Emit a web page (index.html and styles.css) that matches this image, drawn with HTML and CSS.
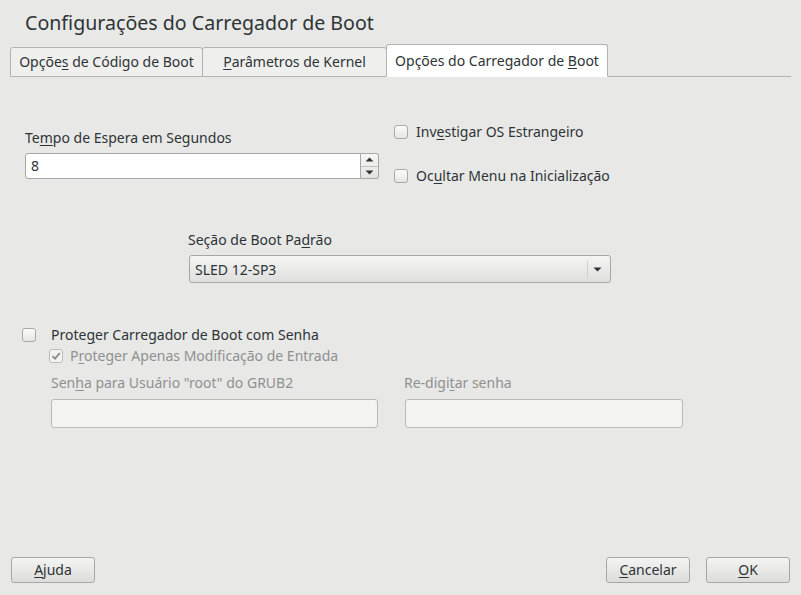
FILE: index.html
```html
<!DOCTYPE html>
<html>
<head>
<meta charset="utf-8">
<link rel="stylesheet" href="styles.css">
</head>
<body>
<div class="dialog">
  <h1 class="title">Configurações do Carregador de Boot</h1>
  <div class="tabs">
    <div class="tab tab-first"><span>Opçõe<u>s</u> de Código de Boot</span></div>
    <div class="tab tab-mid"><span><u>P</u>arâmetros de Kernel</span></div>
    <div class="tab tab-active"><span>Opções do Carregador de <u>B</u>oot</span></div>
    <div class="tab-line"></div>
  </div>
  <div class="content">
    <div class="row-top">
      <div class="col-timeout">
        <div class="label">Te<u>m</u>po de Espera em Segundos</div>
        <div class="spin">
          <div class="spin-input">8</div>
          <div class="spin-buttons">
            <div class="spin-btn"><svg width="9" height="5" viewBox="0 0 9 5"><path d="M0.5 4.5 L4.5 0.5 L8.5 4.5 Z" fill="#2e3436"/></svg></div>
            <div class="spin-btn"><svg width="9" height="5" viewBox="0 0 9 5"><path d="M0.5 0.5 L4.5 4.5 L8.5 0.5 Z" fill="#2e3436"/></svg></div>
          </div>
        </div>
      </div>
      <div class="col-checks">
        <label class="check-row"><span class="box"></span><span>Inv<u>e</u>stigar OS Estrangeiro</span></label>
        <label class="check-row"><span class="box"></span><span>Oc<u>u</u>ltar Menu na Inicialização</span></label>
      </div>
    </div>
    <div class="row-combo">
      <div class="label">Seção de Boot Pa<u>d</u>rão</div>
      <div class="combo">
        <span class="combo-text">SLED 12-SP3</span>
        <span class="combo-sep"></span>
        <svg class="combo-arrow" width="9" height="5" viewBox="0 0 9 5"><path d="M0.5 0.5 L4.5 4.5 L8.5 0.5 Z" fill="#2e3436"/></svg>
      </div>
    </div>
    <div class="row-pass">
      <label class="check-row main-check"><span class="box"></span><span>Prote<u>g</u>er Carregador de Boot com Senha</span></label>
      <div class="pass-body">
        <label class="check-row sub-check disabled"><span class="box checked"><svg width="12" height="12" viewBox="0 0 12 12"><path d="M2.5 6.2 L5 8.7 L9.8 3" fill="none" stroke="#8a8a8a" stroke-width="1.8"/></svg></span><span>P<u>r</u>oteger Apenas Modificação de Entrada</span></label>
        <div class="pass-fields">
          <div class="field f1">
            <div class="label disabled">Sen<u>h</u>a para Usuário "root" do GRUB2</div>
            <div class="text-input"></div>
          </div>
          <div class="field f2">
            <div class="label disabled">Re-digi<u>t</u>ar senha</div>
            <div class="text-input"></div>
          </div>
        </div>
      </div>
    </div>
  </div>
  <div class="footer">
    <button class="btn"><u>A</u>juda</button>
    <div class="spacer"></div>
    <button class="btn"><u>C</u>ancelar</button>
    <button class="btn btn-ok"><u>O</u>K</button>
  </div>
</div>
</body>
</html>
```

FILE: styles.css
```css
html, body {
  margin: 0;
  padding: 0;
}
body {
  background: #e8e8e7;
  font-family: "Noto Sans", "Open Sans", sans-serif;
  font-size: 14px;
  color: #2e3436;
  width: 801px;
  height: 595px;
  overflow: hidden;
}
u {
  text-decoration: underline;
  text-underline-offset: 2px;
}
.dialog {
  display: flex;
  flex-direction: column;
  height: 595px;
}
.title {
  margin: 0;
  padding: 10px 0 0 25px;
  font-size: 19.6px;
  font-weight: normal;
  line-height: 26px;
  height: 34px;
  box-sizing: border-box;
  color: #2e3436;
}
.tabs {
  display: flex;
  align-items: flex-end;
  margin-left: 10px;
  margin-top: 10px;
  height: 33px;
  box-sizing: border-box;
}
.tab {
  height: 30px;
  box-sizing: border-box;
  border: 1px solid #b3b3b2;
  border-radius: 3px 3px 0 0;
  background: #efefee;
  display: flex;
  align-items: center;
  justify-content: center;
  line-height: 18px;
  white-space: nowrap;
}
.tab + .tab {
  margin-left: -1px;
}
.tab-first {
  width: 193px;
}
.tab-mid {
  width: 185px;
}
.tab-active {
  height: 33px;
  width: 222px;
  background: #ffffff;
  border-bottom: 1px solid #ffffff;
}
.tab-line {
  flex: 0 0 183px;
  border-bottom: 1px solid #b3b3b2;
  height: 0;
}
.content {
  flex: 1;
  padding: 0;
}
.label {
  line-height: 19px;
}
.disabled {
  color: #8f9190;
}
.row-top {
  display: flex;
  align-items: flex-start;
  margin-top: 43px;
}
.col-timeout {
  margin-left: 25px;
  width: 354px;
  padding-top: 8px;
}
.col-timeout .label {
  margin-bottom: 6px;
}
.spin {
  display: flex;
  height: 26px;
}
.spin-input {
  flex: 1;
  background: #ffffff;
  border: 1px solid #a7a7a6;
  border-radius: 3px 0 0 3px;
  line-height: 24px;
  padding-left: 5px;
  box-sizing: border-box;
}
.spin-buttons {
  width: 18px;
  display: flex;
  flex-direction: column;
  border: 1px solid #a7a7a6;
  border-left: none;
  border-radius: 0 3px 3px 0;
  box-sizing: border-box;
  background: linear-gradient(#f6f6f5, #e4e4e3);
}
.spin-btn {
  flex: 1;
  display: flex;
  align-items: center;
  justify-content: center;
}
.spin-btn + .spin-btn {
  border-top: 1px solid #c4c4c3;
}
.col-checks {
  margin-left: 15px;
  margin-top: 2px;
  display: flex;
  flex-direction: column;
  gap: 25px;
}
.check-row {
  display: flex;
  align-items: center;
  line-height: 19px;
  gap: 8px;
}
.box {
  width: 14px;
  height: 14px;
  box-sizing: border-box;
  border: 1px solid #a9a9a8;
  border-radius: 3px;
  background: linear-gradient(#fbfbfb, #e6e6e5);
  display: flex;
  align-items: center;
  justify-content: center;
  flex: 0 0 auto;
}
.box.checked {
  border-color: #bcbcbb;
  background: #f2f2f1;
}
.row-combo {
  margin-left: 188px;
  margin-top: 45px;
  width: 423px;
}
.row-combo .label {
  margin-bottom: 6px;
}
.combo {
  margin-left: 1px;
  height: 28px;
  box-sizing: border-box;
  border: 1px solid #a7a7a6;
  border-radius: 3px;
  background: linear-gradient(#f5f5f4, #dfdfde);
  display: flex;
  align-items: center;
  padding-left: 5px;
}
.combo-text {
  flex: 1;
}
.combo-sep {
  width: 1px;
  height: 17px;
  background: #cfcfce;
  margin-right: 5px;
}
.combo-arrow {
  margin-right: 8px;
}
.row-pass {
  margin-top: 42px;
}
.main-check {
  margin-left: 22px;
  gap: 15px;
}
.pass-body {
  margin-left: 49px;
}
.sub-check {
  margin-top: 2px;
  gap: 7px;
  color: #8f9190;
}
.pass-fields {
  display: flex;
  margin-top: 8px;
  margin-left: 2px;
}
.field .label {
  margin-bottom: 7px;
}
.f1 {
  width: 327px;
}
.f2 {
  width: 278px;
  margin-left: 27px;
}
.f2 .label {
  margin-left: -1px;
}
.text-input {
  height: 29px;
  box-sizing: border-box;
  border: 1px solid #b9b9b8;
  border-radius: 3px;
  background: #f3f3f2;
}
.footer {
  display: flex;
  padding: 0 11px 12px 11px;
  align-items: center;
}
.spacer {
  flex: 1;
}
.btn {
  font-family: inherit;
  font-size: 14px;
  color: #2e3436;
  width: 84px;
  height: 26px;
  box-sizing: border-box;
  border: 1px solid #a7a7a6;
  border-radius: 3px;
  background: linear-gradient(#f4f4f3, #dcdcdb);
  padding: 0;
  line-height: 22px;
}
.btn-ok {
  margin-left: 16px;
}
```
